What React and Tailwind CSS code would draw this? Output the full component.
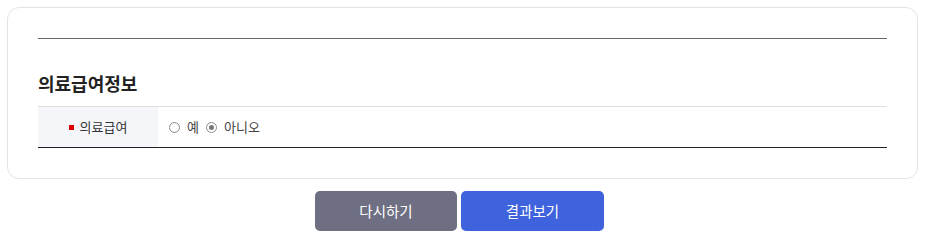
import React from "react";

const Radio = ({ checked, label }) => (
  <label className="flex items-center gap-[7px]">
    <span className="flex h-[11px] w-[11px] items-center justify-center rounded-full border border-[#8a8a8a] bg-white">
      {checked && <span className="h-[5px] w-[5px] rounded-full bg-[#777]" />}
    </span>
    <span>{label}</span>
  </label>
);

export default function App() {
  return (
    <div className="min-h-screen bg-white pt-[7px] font-['Noto_Sans_CJK_KR','Noto_Sans',sans-serif]">
      <section className="ml-[7px] w-[911px] rounded-[12px] border border-[#e3e3e3] px-[30px] pt-[30px] pb-[30px]">
        <div className="border-t border-[#666]" />
        <h2 className="mt-[32px] mb-[11px] text-[18px] font-bold leading-[24px] text-[#222]">의료급여정보</h2>
        <div className="flex h-[42px] border-t border-b border-t-[#dedede] border-b-[#222]">
          <div className="flex w-[120px] items-center justify-center gap-[6px] bg-[#f5f6fa] text-[13px] text-[#333]">
            <span className="h-[5px] w-[5px] bg-[#d00]" />
            <span>의료급여</span>
          </div>
          <div className="flex items-center gap-[7px] pl-[11px] text-[13px] text-[#444]">
            <Radio label="예" />
            <Radio checked label="아니오" />
          </div>
        </div>
      </section>
      <div className="mt-[12px] flex justify-center gap-[4px] pr-[11px]">
        <button className="h-[40px] w-[142px] rounded-[5px] bg-[#6e6f82] text-[14.5px] text-white">다시하기</button>
        <button className="h-[40px] w-[143px] rounded-[5px] bg-[#3e63dc] text-[14.5px] text-white">결과보기</button>
      </div>
    </div>
  );
}
